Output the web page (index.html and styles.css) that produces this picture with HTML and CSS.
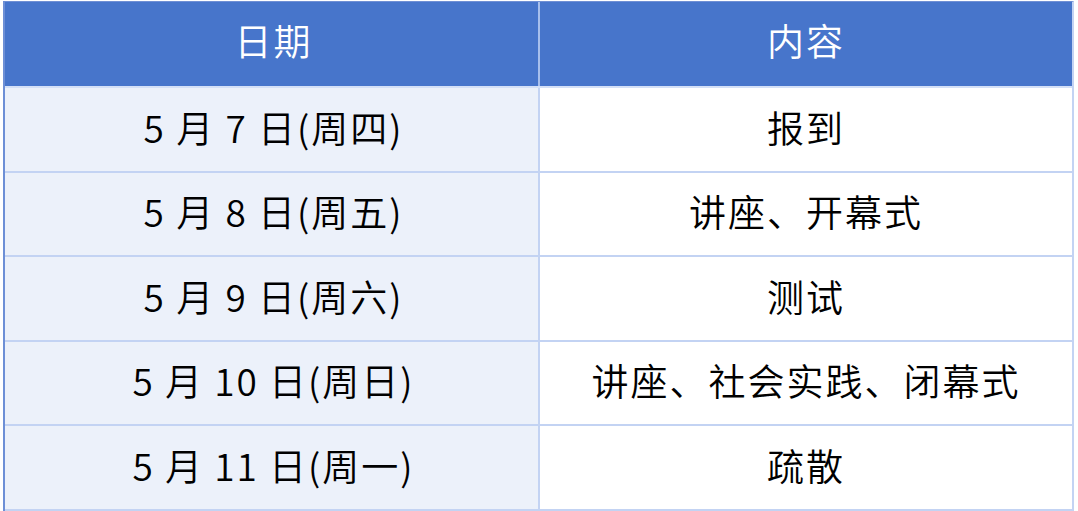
FILE: index.html
```html
<!DOCTYPE html>
<html lang="zh">
<head>
<meta charset="utf-8">
<link rel="stylesheet" href="styles.css">
</head>
<body>
<div class="sheet">
  <div class="row head">
    <div class="cell date">日期</div>
    <div class="cell item">内容</div>
  </div>
  <div class="row">
    <div class="cell date">5 月 7 日(周四)</div>
    <div class="cell item">报到</div>
  </div>
  <div class="row">
    <div class="cell date">5 月 8 日(周五)</div>
    <div class="cell item">讲座、开幕式</div>
  </div>
  <div class="row">
    <div class="cell date">5 月 9 日(周六)</div>
    <div class="cell item">测试</div>
  </div>
  <div class="row">
    <div class="cell date">5 月 10 日(周日)</div>
    <div class="cell item">讲座、社会实践、闭幕式</div>
  </div>
  <div class="row last">
    <div class="cell date">5 月 11 日(周一)</div>
    <div class="cell item">疏散</div>
  </div>
</div>
</body>
</html>
```

FILE: styles.css
```css
html, body {
  margin: 0;
  padding: 0;
  background: #ffffff;
}
body {
  font-family: "Noto Sans CJK SC", "Noto Sans", sans-serif;
}
.sheet {
  margin: 1px 0 0 3px;
  width: 1071px;
  border-top: 1px solid #6f8fd4;
  border-left: 2px solid #6d8fd6;
  border-right: 2px solid #c3d3f3;
  box-sizing: border-box;
  display: flex;
  flex-direction: column;
}
.row {
  display: grid;
  grid-template-columns: 535px 1fr;
  height: 84.5px;
  border-bottom: 2px solid #c3d3f3;
  box-sizing: border-box;
}
.row.head {
  height: 86px;
  background: #4775cb;
  color: #ffffff;
  border-bottom: 2px solid #d4e0f7;
}
.cell {
  display: flex;
  align-items: center;
  justify-content: center;
  font-size: 37px;
  font-weight: 350;
  letter-spacing: 2px;
  color: #000000;
  padding-bottom: 5px;
  box-sizing: border-box;
}
.head .cell {
  color: #ffffff;
  padding-bottom: 8px;
}
.date {
  background: #ecf1fa;
  border-right: 2px solid #c3d3f3;
  padding-left: 4px;
}
.head .date {
  background: transparent;
  border-right: 2px solid #a8bfec;
}
.item {
  background: #ffffff;
}
.head .item {
  background: transparent;
}
```
